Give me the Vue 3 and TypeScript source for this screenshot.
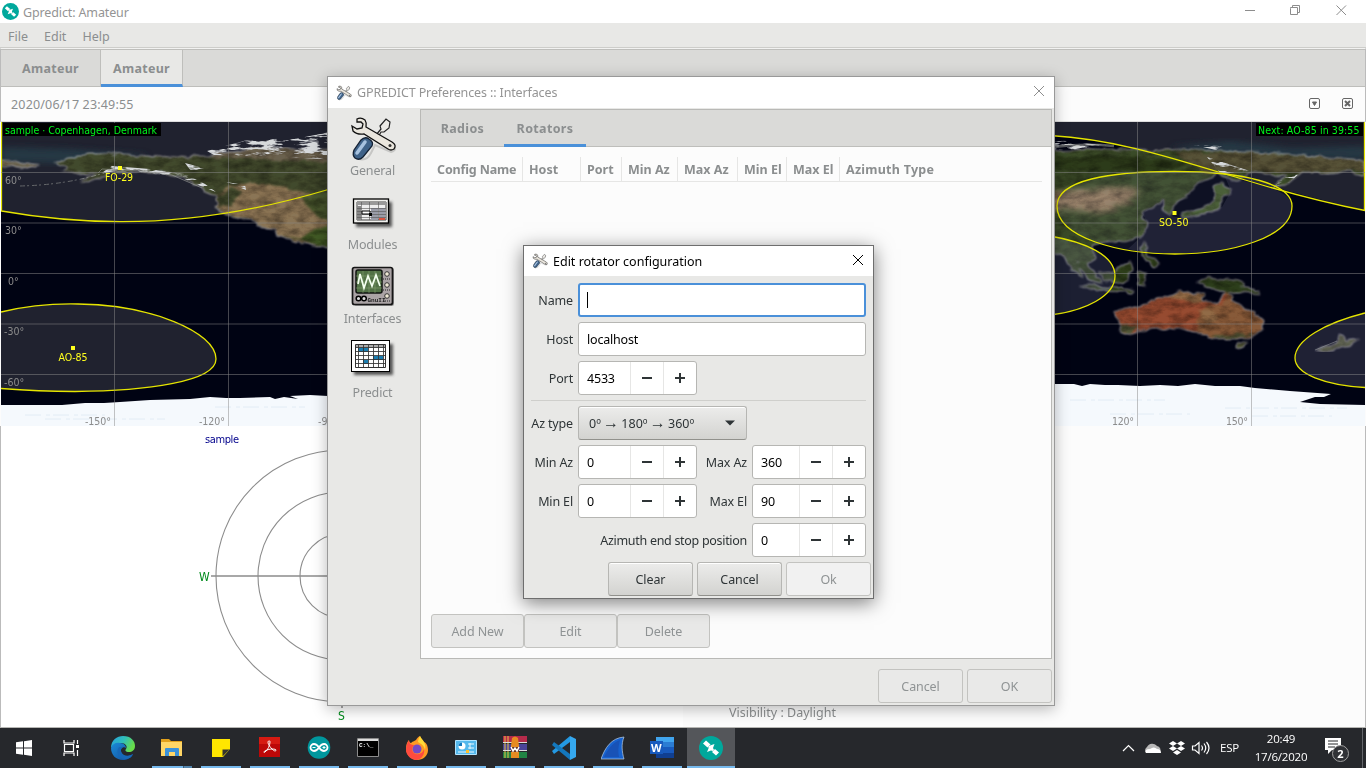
<script setup lang="ts">
interface Column { label: string; width: string }

const columns: Column[] = [
  { label: 'Config Name', width: '92px' },
  { label: 'Host', width: '58px' },
  { label: 'Port', width: '41px' },
  { label: 'Min Az', width: '56px' },
  { label: 'Max Az', width: '60px' },
  { label: 'Min El', width: '49px' },
  { label: 'Max El', width: '53px' },
  { label: 'Azimuth Type', width: '1fr' },
]
const template: string = columns.map((c) => c.width).join(' ')

const sections: string[] = ['General', 'Modules', 'Interfaces', 'Predict']
const apps: string[] = ['edge', 'files', 'notes', 'acrobat', 'arduino', 'cmd', 'firefox', 'panel', 'rar', 'code', 'shark', 'word', 'gpredict']
const meridians: number[] = [114.5, 228.5, 1137.5, 1251.5]
const parallels: number[] = [172.5, 223, 273.5, 324, 374.5]
</script>

<template>
  <div class="screen">
    <svg class="defs" width="0" height="0">
      <defs>
        <symbol id="sat" viewBox="0 0 24 24">
          <circle cx="12" cy="12" r="12" fill="#00a89c" />
          <path d="M4 7.500 7 4.500 11.500 8.500 8.500 11.500zM13 16 16 13 20 16.500 17 19.500z" fill="#fff" />
          <path d="M9.500 10.500 11 9.500 15.500 8 14 12 15 14 14 15 12 14.500 8 16 9.500 12.500z" fill="#fff" />
        </symbol>
        <symbol id="tools" viewBox="0 0 48 48">
          <path d="M10 44q8 2 12-6l4-8 16 7q5-1 4-5" fill="none" stroke="#777" stroke-width="2" opacity=".3" />
          <path d="m27 20 5-6-1-3 6-7 4 3-1 6-5 4-3 0-4 7z" fill="#eceae6" stroke="#222" stroke-width="1.200" />
          <path d="M8 4q4-2 8 1 2 3 1 7L43 27q5 3 2 7-3 2-6 0L15 19Q8 20 4 16L3 11l5 3 5-1 1-4-2-2-4 0z" fill="#eae6dd" stroke="#111" stroke-width="1.300" />
          <circle cx="41" cy="30.500" r="1.500" fill="#333" />
          <path d="M20 24q5 3 3 7L14 42q-4 4-8 1-3-3-1-8l7-10q4-4 8-1z" fill="#3f6288" stroke="#152234" stroke-width="1.300" />
          <path d="M16 27 8 38" stroke="#a7c2df" stroke-width="3.500" stroke-linecap="round" />
        </symbol>
      </defs>
    </svg>

    <section class="main">
      <header class="title">
        <svg class="logo" width="17" height="17"><use href="#sat" /></svg>
        <span class="title-text">Gpredict: Amateur</span>
        <svg class="controls" width="110" height="22" fill="none" stroke="#8d8d8d">
          <path d="M5 11.500h10M50.500 9.500v6h7v-7h-7zM52.500 8v-1.500h7v7H58M96.500 6.500l9.500 9.500M106 6.500l-9.500 9.500" transform="translate(-1 -2)" />
        </svg>
      </header>
      <nav class="menu"><span>File</span><span>Edit</span><span>Help</span></nav>
      <div class="tabs"><span class="tab first">Amateur</span><span class="tab active">Amateur</span></div>
      <div class="modulebar">
        <span class="stamp">2020/06/17 23:49:55</span>
        <svg width="50" height="14" fill="none" stroke="#666">
          <rect x="4.500" y="1.500" width="10" height="10" rx="1.500" /><path d="M7.500 5h4L9.500 8.500z" fill="#666" />
          <rect x="37.500" y="1.500" width="10" height="10" rx="1.500" /><path d="m40 4 5 5m0-5-5 5" stroke-width="2" />
        </svg>
      </div>

      <svg class="map" width="1364" height="304" viewBox="1 122 1364 304">
        <defs>
          <filter id="terrain" x="0" y="0" width="100%" height="100%" color-interpolation-filters="sRGB">
            <feTurbulence type="fractalNoise" baseFrequency=".07 .13" numOctaves="5" seed="8" result="n" />
            <feDisplacementMap in="SourceGraphic" in2="n" scale="8" xChannelSelector="R" yChannelSelector="G" result="d" />
            <feGaussianBlur in="d" stdDeviation=".8" result="b" />
            <feColorMatrix in="n" values=".75 0 0 0 .52 .75 0 0 0 .5 .75 0 0 0 .48 0 0 0 0 1" result="g" />
            <feBlend in="g" in2="b" mode="multiply" result="m" />
            <feComposite in="m" in2="b" operator="in" />
          </filter>
          <filter id="snow" x="-5%" y="-20%" width="110%" height="140%" color-interpolation-filters="sRGB">
            <feTurbulence type="fractalNoise" baseFrequency=".05 .24" numOctaves="4" seed="4" result="n" />
            <feColorMatrix in="n" values="0 0 0 0 .84 0 0 0 0 .85 0 0 0 0 .86 7 0 0 0 -3.300" result="w" />
            <feComposite in="w" in2="SourceGraphic" operator="in" />
          </filter>
          <filter id="blend"><feGaussianBlur stdDeviation="3" /></filter>
        </defs>
        <rect x="1" y="122" width="1364" height="304" fill="#000313" />
        <path d="M1 122H683V150L328 189C260 210 190 222 120 221.500 70 221 30 216 1 211z" fill="#20222f" />
        <path d="M1365 122V210C1300 196 1260 183 1225 174 1160 154 1110 139 1054 136L900 122z" fill="#20222f" />
        <path d="M1 147 70 149 150 155 90 164 1 162zM1170 147l60-6 60 7 75-2v14l-150-6z" fill="#263c48" filter="url(#blend)" opacity=".8" />
        <g filter="url(#terrain)">
          <path d="M1 161 20 162 40 165 28 168 1 165z" fill="#68604b" />
          <path d="M54 163 80 155 110 153 160 157 207 156 245 151 300 155 335 160V250L312 245 289 240 270 228 247 219 226 215 216 207 217 199 204 189 190 180 165 173 140 171 112 172 100 178 78 182 98 173 75 174 60 172 67 167z" fill="#414a2d" />
          <path d="M210 154 255 147 335 151V162L215 158z" fill="#6a614e" />
          <path d="M216 197 232 184 268 184 335 199V247L312 245 290 240 267 227 245 218 225 214 216 206z" fill="#8a7556" />
          <path d="M216 198l18-11 8 6-10 12-14 2z" fill="#414a2d" />
          <path d="M300 196l35-4v32l-18-8z" fill="#46552d" />
          <path d="M282 235 300 239 316 228 335 223V249L310 244z" fill="#415a25" />
          <path d="M1054 151 1100 149 1160 150 1195 149 1235 152 1290 154 1365 162V175L1345 172 1324 173 1300 173 1280 189 1273 187 1287 175 1255 173 1230 180 1218 174 1195 184 1188 194 1174 204 1171 216 1164 211 1164 199 1152 207 1142 213 1147 222 1145 233 1133 240 1105 242 1092 246 1096 257 1087 266 1078 260 1082 278 1072 270 1062 254 1050 255V150z" fill="#3a4b28" />
          <path d="M1050 158l70-2 70 6-20 8-70 2-50-2z" fill="#2c3b1a" />
          <path d="M1050 192 1083 190 1130 187 1141 192 1124 205 1102 213 1065 209 1050 211z" fill="#9a8266" filter="url(#blend)" />
          <path d="M1174 151 1260 153 1365 160V171L1300 172 1205 172 1190 164z" fill="#565238" />
          <path d="M1222 182 1231 191 1222 198 1221 209 1204 214 1182 218 1180 214 1202 209 1215 199 1215 185zM1137 233l6-5 1 6-4 5z" fill="#435a2c" />
          <path d="M1098 273 1115 271 1130 262 1133 270 1124 283 1103 280zM1138 271l10 3-7 7 5 8-8-6zM1142 242l6 5-2 8 13 7-5 4-12-11zM1084 260l18 22-7 2-20-19zM1080 285l54 4-2 4-45-4z" fill="#2d3e1a" />
          <path d="M1197 281 1208 277 1238 281 1250 287 1260 294 1240 292 1226 293 1215 289 1206 288z" fill="#2c3e1b" />
          <path d="M1113 311 1140 305 1154 299 1167 298 1178 292 1202 293 1202 302 1219 304 1226 292 1238 304 1252 313 1265 321 1263 329 1250 336 1236 340 1215 339 1195 332 1177 328 1153 329 1126 333 1122 329z" fill="#964b31" />
          <path d="M1226 292l12 12 14 9 13 8-2 8-13 7-14 4-21-1-19-7 2-15 9-12 17 1z" fill="#875a39" />
          <path d="M1167 298l11-6 24 1v10l-15-3zM1200 310l15 2 2 9-12 2z" fill="#916b47" />
          <path d="M1118 325 1138 326 1132 332 1121 332zM1212 335 1252 334 1235 340 1216 339zM1237 343l9 0-3 5-6-1zM1340 333l7 8 12-2-7 5-19 7-17 1 20-9z" fill="#505637" />
        </g>
        <g filter="url(#snow)">
          <path d="M207 151 247 140 300 138 340 130V160L285 157 214 155z" fill="#fff" />
          <path d="M1053 139 1080 143 1116 146 1100 149 1053 150z" fill="#fff" />
          <path d="M100 174 112 166 150 169 185 174 205 184 216 192 203 187 180 177 145 173 115 171zM185 163l19 5-13 3zM226 182l19 3 1 5z" fill="#fff" />
          <path d="M1207 157l43 14-29 3zM1273 188l12-12 15-3-10 9zM1194 145l28 1-6 4z" fill="#fff" />
        </g>
        <g class="coast">
          <path d="M20 186q45-1 84-13" />
          <path d="M1054 147q30-4 60-1" stroke-dasharray="none" stroke-width="2.500" />
          <path d="M98 173l4-4 35 2 35 4 30 13M1315 350l22-9" stroke-dasharray="none" />
        </g>
        <path d="M1 405H62L85 403 104 403 120 402 150 400 190 399 210 397 226 398 240 398 270 397 275 399 284 397 298 399 290 396 310 395 328 396H683 1054V384L1074 384 1082 386 1090 384 1105 385 1118 385 1140 386 1160 385 1178 386 1195 384 1215 386 1240 386 1255 388 1290 391 1331 394 1324 397 1315 397 1300 402 1320 404 1365 405V426H1z" fill="#f5f9fd" />
        <path d="M25 415h80m-60 4h120m50-12h90M1070 400h95m60 8h122m-95 8h80M1110 414h80" stroke="#d5e4ef" stroke-dasharray="16 5 4 3" opacity=".6" />
        <path d="M1 312C30 305 55 303.500 78 304 150 304.500 216 332 216 359 216 382 145 391 75 391.500 45 391.500 20 390 1 388.500" fill="#20222f" />
        <path d="M1365 313C1325 323 1295 340 1295 358 1295 374 1325 385 1365 387z" fill="#8b8fae" opacity=".22" />
        <path d="M1292 206C1292 238 1230 254 1175 254 1120 254 1057 238 1057 206 1057 180 1110 171.500 1174 171.500 1245 171.500 1292 184 1292 206z" fill="#8b8fae" opacity=".1" />
        <path d="M1292 206C1292 238 1230 254 1175 254 1155 254 1141 252 1128 249L1145 233 1147 222 1142 213 1164 199 1164 211 1171 216 1182 218 1222 207 1231 191 1225 177 1262 185Q1292 194 1292 206z" fill="#8b8fae" opacity=".14" />
        <path d="M1050 236C1085 242 1115 255 1115 276 1115 296 1085 311 1050 315z" fill="#8b8fae" opacity=".2" />
        <g class="foot">
          <path d="M1.500 122V211C30 216 70 221.500 120 221.700 190 222 260 210 330 189" />
          <path d="M1050 135.500C1110 139 1160 154 1225 174 1260 184 1300 198 1365 210.500M1364.500 122v88" />
          <path d="M1 312C30 305 55 303.500 78 304 150 304.500 216 332 216 359 216 382 145 391 75 391.500 45 391.500 20 390 1 388.500" />
          <path d="M1365 313C1325 323 1295 340 1295 358 1295 374 1325 385 1365 387.500" />
          <path d="M1292 206C1292 238 1230 254 1175 254 1120 254 1057 238 1057 206 1057 180 1110 171.500 1174 171.500 1245 171.500 1292 184 1292 206z" />
          <path d="M1050 236C1085 242 1115 255 1115 276 1115 296 1085 311 1050 315" />
        </g>
        <g stroke="#8a8a8a" stroke-opacity=".5">
          <line v-for="x in meridians" :key="x" :x1="x" :x2="x" y1="122" y2="426" />
          <line v-for="y in parallels" :key="y" x1="1" x2="1365" :y1="y" :y2="y" />
        </g>
        <g class="degrees">
          <text x="5" y="184">60°</text><text x="5" y="234">30°</text><text x="8" y="285">0°</text>
          <text x="4" y="335">-30°</text><text x="4" y="386">-60°</text>
          <text x="85" y="425" textLength="26">-150°</text><text x="199" y="425" textLength="26">-120°</text><text x="318" y="425">-90°</text>
          <text x="1112" y="425" textLength="22">120°</text><text x="1226" y="425" textLength="22">150°</text>
        </g>
        <g fill="#ffff1e">
          <path d="M118 166h4v4h-4zM71 346h4v4h-4zM1172.500 211h4v4h-4z" />
          <text x="105" y="181" textLength="28">FO-29</text><text x="58.500" y="361" textLength="29">AO-85</text><text x="1159" y="226" textLength="29.500">SO-50</text>
        </g>
        <path d="M3 123h158v13H3zM1256 123h107v13h-107z" fill="#000" />
        <g fill="#00f51c">
          <text x="5" y="134" textLength="152">sample · Copenhagen, Denmark</text>
          <text x="1258" y="134" textLength="101.500">Next: AO-85 in 39:55</text>
        </g>
      </svg>

      <div class="panes">
        <svg class="polar" width="682" height="301" viewBox="1 426 682 301">
          <g fill="none" stroke="#8c8c8c" stroke-width="1.100">
            <circle cx="342" cy="576" r="126" /><circle cx="342" cy="576" r="84" /><circle cx="342" cy="576" r="42" />
            <path d="M211 576H473M342 445V708" stroke-width="1.500" />
          </g>
          <text x="205" y="443" fill="#00008b" textLength="34">sample</text>
          <g fill="#008b1c" class="compass"><text x="199" y="581">W</text><text x="338" y="720">S</text></g>
        </svg>
        <div class="single">Visibility : Daylight</div>
      </div>
    </section>

    <section class="prefs">
      <header class="win-title">
        <svg width="16" height="16"><use href="#tools" /></svg><span class="pt">GPREDICT Preferences :: Interfaces</span>
        <svg class="x" width="12" height="12" stroke="#8e8e8e"><path d="m1 1 10 10M11 1 1 11" /></svg>
      </header>
      <div class="prefs-body">
        <aside>
          <div v-for="name in sections" :key="name" class="section">
            <svg v-if="name === 'General'" width="48" height="48"><use href="#tools" /></svg>
            <svg v-else-if="name === 'Modules'" width="48" height="48">
              <rect x="7" y="13" width="36" height="25" fill="#555" filter="url(#blur2)" />
              <rect x="4.500" y="10" width="35" height="24" fill="#f1f1ee" stroke="#000" stroke-width="1.300" />
              <path d="M8 13h29v18H8z" fill="#eee" stroke="#444" />
              <path d="M8 13h29v3H8z" fill="#999" /><path d="M8 17h4v14H8z" fill="#888" />
              <path d="M22 19h7v12h-7zm8 0h6v12h-6z" fill="#9a9ca8" />
              <path d="M8 19.500h29m-29 3h29m-29 3h29m-29 3h29M12.500 13v18m8-18v18m9-18v18" stroke="#555" stroke-width=".6" />
              <path d="M13 22h8v3h-8z" fill="#fff" stroke="#000" /><path d="M20 24h3v3h-3z" fill="#000" /><path d="M30 29h6v2h-6z" fill="#d8533f" />
            </svg>
            <svg v-else-if="name === 'Interfaces'" width="48" height="48">
              <rect x="5" y="5" width="40" height="38" rx="2" fill="#999" />
              <rect x="3.500" y="4.500" width="40" height="37" rx="2" fill="#aaa3a5" stroke="#151515" stroke-width="1.700" />
              <rect x="7" y="7" width="26" height="23" rx="2" fill="#527246" stroke="#101510" stroke-width="1.500" />
              <path d="M7 13h26M7 19h26M7 25h26M14 8v22M20 8v22M26 8v22" stroke="#8cab79" stroke-width=".5" />
              <path d="m9 21 2-10 4 14 4-12 4 10 4-11 4 11" fill="none" stroke="#f4fff0" stroke-width="1.700" />
              <g fill="#eee8d4" stroke="#333"><circle cx="38" cy="11" r="2.300" /><circle cx="38" cy="22" r="2.300" /><circle cx="38" cy="33" r="2.300" /></g>
              <path d="M34 16h8m-8 11h8m-8 11h8" stroke="#222" stroke-dasharray="1 1" />
              <g fill="#ddd" stroke="#000" stroke-width="1.500"><circle cx="9.500" cy="35.500" r="2.300" /><circle cx="15" cy="35.500" r="2.300" /></g>
              <text x="18.500" y="38.500" class="gnu">GnuII</text>
            </svg>
            <svg v-else width="48" height="48">
              <rect x="5" y="7" width="39" height="31" fill="#555" filter="url(#blur2)" />
              <rect x="2.500" y="3.500" width="38" height="31" fill="#fff" stroke="#000" />
              <path d="M6.500 7.500h30v23h-30z" fill="#fff" stroke="#333" /><path d="M7 8h29v3H7z" fill="#aaa" />
              <path d="M9 11h10v4H9zm15 8h10v4H24zm-10 4h5v4h-5z" fill="#1c7daf" />
              <path d="M6 10.500h31m-31 4h31m-31 4h31m-31 4h31m-31 4h31M9.500 8v22m5-22v22m5-22v22m5-22v22m5-22v22m5-22v22" stroke="#333" stroke-width=".85" />
              <defs><filter id="blur2"><feGaussianBlur stdDeviation="1.500" /></filter></defs>
            </svg>
            <span>{{ name }}</span>
          </div>
        </aside>
        <div class="notebook">
          <div class="nb-tabs"><span class="nb-tab radios">Radios</span><span class="nb-tab on">Rotators</span></div>
          <div class="cols" :style="{ gridTemplateColumns: template }">
            <span v-for="c in columns" :key="c.label">{{ c.label }}</span>
          </div>
          <div class="nb-buttons"><button>Add New</button><button>Edit</button><button>Delete</button></div>
        </div>
        <footer><button>Cancel</button><button>OK</button></footer>
      </div>
    </section>

    <section class="dialog">
      <header class="win-title dark">
        <svg width="16" height="16"><use href="#tools" /></svg><span class="dt">Edit rotator configuration</span>
        <svg class="x" width="12" height="12" stroke="#000"><path d="m1 1 10 10M11 1 1 11" /></svg>
      </header>
      <div class="form">
        <label>Name</label><div class="entry focus wide"><i class="caret"></i></div>
        <label>Host</label><div class="entry wide"><span>localhost</span></div>
        <label>Port</label><div class="entry spin"><span>4533</span><b class="minus"></b><b class="plus"></b></div><i class="blank"></i>
        <hr />
        <label>Az type</label>
        <div class="combo"><span>0º <em>→</em> 180º <em>→</em> 360º</span><svg width="12" height="8"><path d="M1 1.500h10L6 6.500z" fill="#2e3436" /></svg></div>
        <label>Min Az</label><div class="entry spin"><span>0</span><b class="minus"></b><b class="plus"></b></div>
        <label>Max Az</label><div class="entry spin"><span>360</span><b class="minus"></b><b class="plus"></b></div>
        <label>Min El</label><div class="entry spin"><span>0</span><b class="minus"></b><b class="plus"></b></div>
        <label>Max El</label><div class="entry spin"><span>90</span><b class="minus"></b><b class="plus"></b></div>
        <label class="stop">Azimuth end stop position</label><div class="entry spin"><span>0</span><b class="minus"></b><b class="plus"></b></div>
      </div>
      <div class="actions"><button class="live">Clear</button><button class="live">Cancel</button><button>Ok</button></div>
    </section>

    <footer class="taskbar">
      <div class="sys">
        <svg width="16" height="16" fill="#fff"><path d="M0 2.300 7 1.300V7.500H0zM8 1.200 16 0V7.500H8zM0 8.500H7V14.700L0 13.700zM8 8.500H16V16L8 14.800z" /></svg>
      </div>
      <div class="sys">
        <svg width="17" height="16" fill="none" stroke="#fff" stroke-width="1.200"><path d="M1 0v3h10V0M1.500 4.500h9v7h-9zM1 16v-3h10v3M14.500 0v4M14.500 10v6" /><path d="M13 5h3v3h-3z" fill="#fff" stroke="none" /></svg>
      </div>
      <div class="apps">
        <div v-for="a in apps" :key="a" class="app" :class="[a, { run: a !== 'edge' }]">
          <svg width="24" height="24" viewBox="0 0 24 24">
            <g v-if="a === 'edge'">
              <defs>
                <linearGradient id="e1" x2="1" y2=".4"><stop stop-color="#269fe0" /><stop offset=".55" stop-color="#30bfb9" /><stop offset="1" stop-color="#68dc4a" /></linearGradient>
                <linearGradient id="e2" x2="1" y2="1"><stop stop-color="#1b8bd7" /><stop offset="1" stop-color="#124f9d" /></linearGradient>
              </defs>
              <path d="M0 12C0 4 6 0 12 0c8 0 12 5 12 10 0 4-3 6-6 6-4 0-4-2-3-3 2-3-1-6-5-6-5 0-8 2-10 5z" fill="url(#e1)" />
              <path d="M0 12c1-4 5-6 9-5 4 0 6 3 6 5-2-2-6 0-5 4 2 5 8 5 12 2-2 4-6 6-10 6C5 24 0 19 0 12z" fill="url(#e2)" />
              <path d="M8 11c-4 5 0 12 6 12 4 0 7-2 8-5-5 3-11 2-12-3 0-2 0-3 2-4z" fill="#1768b7" />
            </g>
            <g v-else-if="a === 'files'">
              <path d="M1 3h8l2 2h11v15H1z" fill="#e2a11c" /><path d="M1 6h21v14H1z" fill="#ffd666" />
              <path d="M5 20v-7q0-1 1-1h12q1 0 1 1v7h-4v-4H9v4z" fill="#3b92d9" />
            </g>
            <g v-else-if="a === 'notes'"><path d="M3 3h18v18H3z" fill="#ffe600" /><path d="M13 21v-9h8v9z" fill="#26282c" /><path d="M13 12h8v1l-7 8h-1z" fill="#ffe600" /><path d="M13.500 20.500V13.500h7z" fill="#34352f" /></g>
            <g v-else-if="a === 'acrobat'">
              <path d="M1 1h21v20H1z" fill="#bc0808" /><path d="M1 1h21v7H1z" fill="#d61a12" />
              <path d="M11 5c-2 0-1 4 3 8 3 3 4 2 4 1s-6-2-11 1c-2 1-1 2 0 1 3-2 5-7 5-10 0-1 0-1-1-1z" fill="none" stroke="#fff" />
            </g>
            <g v-else-if="a === 'arduino'">
              <circle cx="12" cy="11.500" r="11.300" fill="#00979d" />
              <path d="M12 11.500C10 8.500 8.500 8 7 8a3.500 3.500 0 0 0 0 7c1.500 0 3-.5 5-3.500s3.500-3.500 5-3.500a3.500 3.500 0 0 1 0 7c-1.500 0-3-.5-5-3.500z" fill="none" stroke="#fff" stroke-width="1.800" />
              <path d="M5.500 11.500h3m7 0h3M17 10v3" stroke="#fff" />
            </g>
            <g v-else-if="a === 'cmd'"><path d="M1.500 2.500h21v18h-21z" fill="#000" stroke="#8c8c8c" /><path d="M2 3h20v2H2z" fill="#ddd" /><text x="3" y="11" class="prompt">C:\_</text></g>
            <g v-else-if="a === 'firefox'">
              <path d="M4 4c0 2 1 3 2 3 2-2 4-2 5-3 1-2 2-3 4-4 1 3 3 4 4 6 3 1 4 5 4 8 0 6-5 10-11 10S1 18 1 13c0-4 1-7 3-9z" fill="#ff9a24" />
              <path d="M4 4c0 4 2 5 6 5-3 1-4 5-1 8 4 3 9 0 10-4 1 5-2 10-7 11C6 24 1 19 1 14c0-4 1-7 3-10z" fill="#ff4b3f" />
              <circle cx="12" cy="13" r="4.500" fill="#7549c7" /><path d="M15 0c2 4 7 7 5 14-1-5-4-6-7-8 0-2 1-4 2-6z" fill="#ffda38" />
            </g>
            <g v-else-if="a === 'panel'">
              <path d="M1.500 4.500h21v14h-21z" fill="#54b8ec" stroke="#b1e4ff" /><circle cx="8" cy="10" r="3.500" fill="#fff" /><path d="M8 6.500v3.500H4.500a3.500 3.500 0 0 1 3.500-3.500z" fill="#147abf" />
              <path d="M14 8h6m-6 4h6m-16 4h16M16 7v6" stroke="#eaf8ff" /><path d="M12 14h3v3h-3z" fill="#ffc12c" />
            </g>
            <g v-else-if="a === 'rar'">
              <path d="M0 0h24v6H0z" fill="#b52b4b" /><path d="M0 8h24v6H0z" fill="#4b4499" /><path d="M0 16h24v6H0z" fill="#218544" /><path d="M2 0v22M5 0v22" stroke="#e8c345" />
              <path d="M0 6.500h24M0 14.500h24" stroke="#ddd" /><path d="M9 2q3-3 6 0l1 8v12H8V10z" fill="#e78b21" /><path d="M8 11h8v5H8z" fill="#6a3824" /><path d="m8 11 2 4 2-3 2 3 2-4" stroke="#fff" stroke-width="1.500" fill="none" />
            </g>
            <g v-else-if="a === 'code'"><path d="m0 15 2 3L18 6V0z" fill="#2499e2" /><path d="M0 9l2-3 16 12v6z" fill="#1478bd" /><path d="M18 0 24 3v18l-6 3z" fill="#35a8ef" /></g>
            <g v-else-if="a === 'shark'"><path d="M0 23C4 12 10 2 23 1c-3 7-2 15 0 22z" fill="#1762cf" stroke="#bcd0e4" stroke-width=".7" /><path d="M3 21C7 13 12 6 19 4c-2 7-2 12-1 17z" fill="#1852b6" /></g>
            <g v-else-if="a === 'word'"><path d="M6 1h18v21H6z" fill="#2b7cd3" /><path d="M6 1h18v5H6z" fill="#41a5ee" /><path d="M6 11h18v6H6z" fill="#185abd" /><path d="M6 17h18v5H6z" fill="#103f91" /><path d="M0 5h13v13H0z" fill="#185abd" /><text x="1" y="15.500" class="w">W</text></g>
            <use v-else href="#sat" />
          </svg>
        </div>
      </div>
      <div class="tray">
        <svg width="90" height="20" fill="none" stroke="#fff" stroke-width="1.200">
          <path d="m1 13 5.500-5.500L12 13" />
          <path d="M24 15a4 4 0 0 1 1-6 6 6 0 0 1 10-1 4 4 0 0 1 3 6z" fill="#b8b8b8" stroke="none" /><path d="M24 15q-2-4 4-4 4-3 7 0 4 0 4 4z" fill="#fff" stroke="none" />
          <path d="m51 3 4 2.500L51 8l-4-2.500zm8 0 4 2.500L59 8l-4-2.500zM51 8l4 2.500-4 2.500-4-2.500zm8 0 4 2.500-4 2.500-4-2.500zM55 12l4 2.500-4 2.500-4-2.500z" fill="#fff" stroke="none" />
          <path d="M70.500 8h2.500l4-3.500v11L73 12h-2.500zM79.500 7.500q2 2.500 0 5M82 5.500q3.500 4.500 0 9M84.500 4q5 6 0 12" />
        </svg>
        <span class="lang">ESP</span>
        <div class="clock"><span>20:49</span><span class="date">17/6/2020</span></div>
        <svg class="notify" width="26" height="26"><path d="M1 1h16v12H8l-4 4v-4H1z" fill="#fff" /><path d="M4 4h10M4 7h10M4 10h7" stroke="#26282b" /><circle cx="16.500" cy="16.500" r="8" fill="#303236" stroke="#a0a0a0" /><text x="13.300" y="21">2</text></svg>
        <i class="peek"></i>
      </div>
    </footer>
  </div>
</template>

<style>
html, body { margin: 0; overflow: hidden; }
</style>
<style scoped>
.screen { position: relative; width: 1366px; height: 768px; overflow: hidden; background: #fcfcfc; font: 12.5px/18px "Noto Sans", "Open Sans", sans-serif; color: #8b8e8f; }
.screen *, .screen *::before, .screen *::after { box-sizing: border-box; }
svg { display: block; flex: none; }
.defs { position: absolute; }
.main { height: 728px; display: flex; flex-direction: column; border-bottom: 1px solid #b6b6b3; }
.title { height: 23px; background: #fff; display: flex; align-items: center; padding-left: 2px; flex: none; color: #949494; }
.title-text { margin-left: 4px; padding-top: 3px; letter-spacing: -.13px; }
.controls { margin-left: auto; margin-right: 15px; }
.menu { height: 25px; flex: none; background: #e8e8e6; border-bottom: 1px solid #cdcdca; display: flex; gap: 16px; padding: 5px 8px 0; line-height: 18px; }
.tabs { height: 39px; flex: none; border-top: 1px solid #f2f2f1; background: #dadad8; display: flex; font-weight: bold; border-left: 1px solid #bbb; border-right: 1px solid #bbb; border-bottom: 1px solid #bebebb; box-shadow: inset 0 1px #bebebb; letter-spacing: .3px; }
.tab { padding: 10px 0 0; text-align: center; margin-top: 1px; }
.tab.first { width: 100px; border-right: 1px solid #bebebb; }
.tab.active { width: 82px; background: #e8e8e6; border-right: 1px solid #bebebb; border-bottom: 3px solid #4a90d9; height: 37px; }
.modulebar { height: 35px; flex: none; border: 1px solid #bbb; border-top: 0; border-bottom-color: #ddd; background: #fcfcfc; display: flex; align-items: center; justify-content: space-between; padding: 0 10px; }
.stamp { letter-spacing: .17px; padding-top: 2px; }
.map { margin-left: 1px; font: 10.5px "DejaVu Sans Condensed", "DejaVu Sans", sans-serif; }
.degrees { fill: #8c8c8c; }
.foot { fill: none; stroke: #e5e500; stroke-width: 1.300; }
.coast { fill: none; stroke: #a9aca6; stroke-width: 1; stroke-dasharray: 5 2 2 3; opacity: .5; }
.panes { display: grid; grid-template-columns: 682px 1fr; height: 301px; border-left: 1px solid #bbb; border-right: 1px solid #bbb; }
.polar { background: #fff; font: 11px "DejaVu Sans Condensed", "DejaVu Sans", sans-serif; }
.compass { font-size: 12px; }
.single { display: flex; align-items: flex-end; padding: 0 0 5px 46px; }

.prefs, .dialog { position: absolute; background: #e8e8e6; border: 1px solid #999; }
.prefs { left: 327px; top: 76px; width: 728px; height: 630px; box-shadow: 0 3px 14px rgba(0,0,0,.28); }
.win-title { height: 31px; background: #fff; display: flex; align-items: center; padding: 0 9px 0 8px; color: #949494; }
.win-title span { margin-left: 5px; }
.pt { letter-spacing: -.13px; }
.win-title .x { margin-left: auto; margin-bottom: 3px; }
.dark { color: #000; height: 30px; }
.dark span { padding-top: 1px; }
.prefs-body { display: grid; grid-template-columns: 92px 632px; grid-template-rows: 550px 46px; padding-top: 1px; }
aside { padding: 6px 3px 0 0; }
.section { height: 74px; display: flex; flex-direction: column; align-items: center; }
.section span { margin-top: -1px; letter-spacing: -.15px; }
.gnu { font: bold 6px "Liberation Mono", monospace; fill: #222; }
.notebook { border: 1px solid #b9b9b6; background: #fcfcfc; display: flex; flex-direction: column; }
.nb-tabs { height: 37px; background: #dadad8; border-bottom: 1px solid #bebebb; display: flex; font-weight: bold; flex: none; letter-spacing: .35px; }
.nb-tab { padding-top: 10px; height: 37px; width: 83px; text-align: center; }
.nb-tab.on { width: 82px; border-bottom: 3px solid #4a90d9; }
.cols { margin: 10px 9px 0 10px; height: 25px; border-bottom: 1px solid #e6e6e5; display: grid; font-weight: bold; line-height: 25px; }
.cols span { padding-left: 6px; border-right: 1px solid #e6e6e5; white-space: nowrap; }
.cols span:first-child { letter-spacing: -.15px; }
.cols span:last-child { border: 0; letter-spacing: .25px; }
.nb-buttons { margin-top: auto; padding: 0 0 10px 10px; display: flex; }
.nb-buttons button { width: 93px; }
button { font: inherit; width: 85px; height: 34px; padding: 2px 0 0; border: 1px solid #c3c3c0; border-radius: 3px; background: #f1f1f1; color: #8f9394; letter-spacing: -.1px; }
.notebook button, .prefs footer button { background: #e9e9e8; }
.prefs footer { grid-column: 1 / -1; display: flex; justify-content: flex-end; gap: 4px; padding-top: 10px; }
button.live { color: #2e3436; border-color: #b6b6b3; border-bottom-color: #91918c; background: linear-gradient(#ececeb, #d3d3d0); box-shadow: inset 0 1px #fff; }

.dialog { left: 523px; top: 245px; width: 351px; height: 354px; border-color: #6e6e6e; color: #2e3436; box-shadow: 0 4px 18px rgba(0,0,0,.5); }
.form { display: grid; grid-template-columns: 50px 119px 55px 114px; row-gap: 5px; padding: 7px 0 0 4px; align-items: center; }
.form label { text-align: right; padding: 2px 5px 0 0; white-space: nowrap; letter-spacing: -.15px; }
.form label.stop { letter-spacing: -.3px; }
.entry { height: 34px; border: 1px solid #b6b6b3; border-radius: 3px; background: #fff; color: #000; padding-left: 8px; display: flex; align-items: center; }
.entry span { padding-top: 2px; letter-spacing: -.2px; }
.wide { grid-column: 2 / 5; }
.focus { border: 2px solid #4a90d9; padding-left: 7px; }
.caret { width: 1px; height: 16px; background: #000; }
.spin span { flex: 1; }
.spin b { width: 33px; height: 32px; border-left: 1px solid #e6e6e5; background: linear-gradient(#2e3436, #2e3436) center / 10px 2px no-repeat; }
.spin .plus { background: linear-gradient(#2e3436, #2e3436) center / 10px 2px no-repeat, linear-gradient(#2e3436, #2e3436) center / 2px 10px no-repeat; }
.blank { grid-column: 3 / 5; }
hr { grid-column: 1 / 5; width: 335px; height: 1px; margin: 0 0 0 3px; border: 0; background: #cfcfcc; }
.combo { grid-column: 2 / 5; width: 169px; height: 34px; border: 1px solid #b6b6b3; border-bottom-color: #91918c; border-radius: 3px; background: linear-gradient(#ececeb, #d3d3d0); box-shadow: inset 0 1px #fff; display: flex; align-items: center; justify-content: space-between; padding: 0 10px; }
.combo span { padding-top: 2px; white-space: nowrap; }
.combo em { display: inline-block; width: 14px; font: 16px/16px "Liberation Sans", sans-serif; text-indent: -1px; }
.stop { grid-column: 1 / 4; }
.actions { display: flex; justify-content: flex-end; gap: 4px; padding: 5px 2px 0 0; }

.taskbar { height: 40px; background: #26282c; display: flex; color: #fff; font-family: "Open Sans", "Noto Sans", sans-serif; }
.sys { width: 48px; display: flex; align-items: center; justify-content: center; }
.sys + .sys { width: 47px; }
.apps { display: flex; margin-left: 4px; }
.app { width: 49px; display: flex; justify-content: center; padding: 8px 2px 0 0; position: relative; }
.app.run::after { content: ""; position: absolute; left: 4px; bottom: 0; width: 40px; height: 2px; background: #76b9ed; }
.app.files::after { background: linear-gradient(90deg, #76b9ed 31px, #3f5f78 31px, #3f5f78 32px, #5385ad 32px); }
.app.gpredict { width: 48px; padding-right: 0; background: #54565a; }
.app.gpredict::after { left: 0; width: 48px; }
.prompt { font: bold 6px "Liberation Mono", monospace; fill: #fff; }
.w { font: bold 11px "Open Sans", sans-serif; fill: #fff; }
.tray { margin-left: auto; display: flex; align-items: center; font-size: 11.500px; }
.lang { margin-left: 8px; width: 33px; letter-spacing: -.2px; }
.clock { display: flex; flex-direction: column; align-items: center; width: 56px; line-height: 18px; letter-spacing: -.2px; }
.notify { margin: 3px 12px 0 15px; font: bold 11px "Open Sans", sans-serif; fill: #fff; }
.peek { width: 4px; height: 40px; border-left: 1px solid #63656a; }
</style>
